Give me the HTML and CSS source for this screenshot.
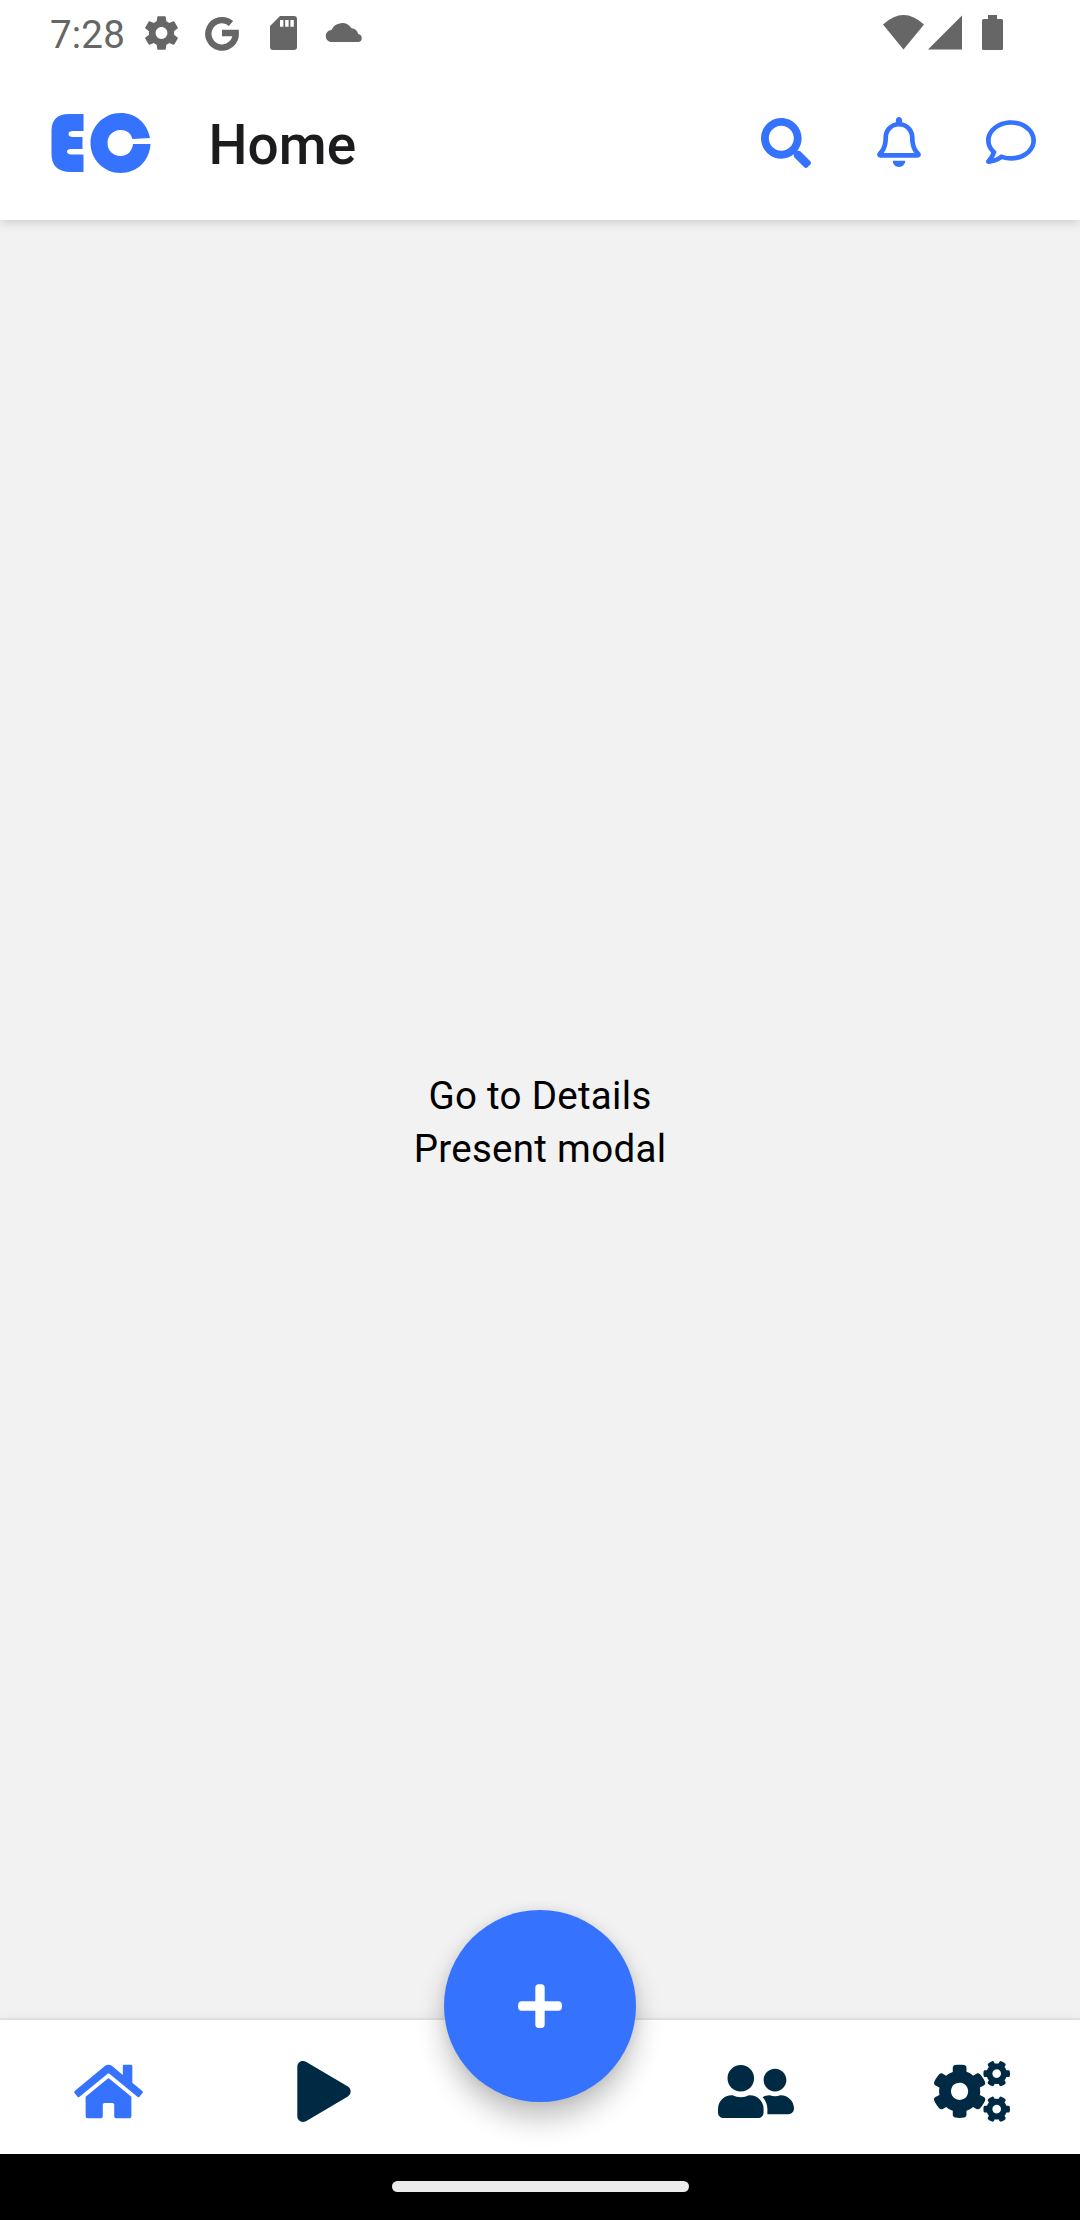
FILE: index.html
```html
<!DOCTYPE html>
<html lang="en">
<head>
<meta charset="utf-8">
<title>Home</title>
<link rel="stylesheet" href="styles.css">
</head>
<body>
<div class="app">
  <div class="top">
    <div class="status">
      <span class="clock">7:28</span>
      <svg class="st-gear" viewBox="2.2 2 19.6 20"><path d="M19.43 12.98c.04-.32.07-.64.07-.98s-.03-.66-.07-.98l2.11-1.65c.19-.15.24-.42.12-.64l-2-3.46c-.12-.22-.39-.3-.61-.22l-2.49 1c-.52-.4-1.08-.73-1.69-.98l-.38-2.65C14.46 2.18 14.25 2 14 2h-4c-.25 0-.46.18-.49.42l-.38 2.65c-.61.25-1.17.59-1.69.98l-2.49-1c-.23-.09-.49 0-.61.22l-2 3.46c-.13.22-.07.49.12.64l2.11 1.65c-.04.32-.07.65-.07.98s.03.66.07.98l-2.11 1.65c-.19.15-.24.42-.12.64l2 3.46c.12.22.39.3.61.22l2.49-1c.52.4 1.08.73 1.69.98l.38 2.65c.03.24.24.42.49.42h4c.25 0 .46-.18.49-.42l.38-2.65c.61-.25 1.17-.59 1.69-.98l2.49 1c.23.09.49 0 .61-.22l2-3.46c.12-.22.07-.49-.12-.64l-2.11-1.65zM12 15.5c-1.93 0-3.5-1.57-3.5-3.5s1.57-3.5 3.5-3.5 3.5 1.57 3.5 3.5-1.57 3.5-3.5 3.5z"/></svg>
      <svg class="st-g" viewBox="0 0 34 34"><path d="M26 7.5A13.7 13.7 0 1 0 30.7 17H17" fill="none" stroke="#666" stroke-width="6.4"/></svg>
      <svg class="st-sd" viewBox="0 0 27 34"><path fill-rule="evenodd" d="M10 0h14a3 3 0 0 1 3 3v28a3 3 0 0 1-3 3H3a3 3 0 0 1-3-3V10zM10 4v6.700h3.400V4zM15.200 4v6.700h3.400V4zM20.400 4v6.700h3.400V4z"/></svg>
      <svg class="st-cloud" viewBox="0 0 37 21"><path d="M6 21a6 6 0 0 1-.6-12A11.500 11.500 0 0 1 25.500 7.200A7.500 7.500 0 0 1 32.200 13A4.100 4.100 0 0 1 32.800 21z"/></svg>
      <svg class="st-net" viewBox="0 0 80 35"><path d="M0 9.500Q20.500-9.500 41 9.500L20.500 34.500zM45 34.500L79 .5v34z"/></svg>
      <svg class="st-bat" viewBox="0 0 21 35"><path d="M6 0h9v4h4.500q1.500 0 1.500 1.500v28q0 1.500-1.500 1.500h-18Q0 35 0 33.500v-28Q0 4 1.500 4H6z"/></svg>
    </div>
    <header class="bar">
      <svg class="logo" viewBox="0 0 100 60"><path d="M32.500 1v17H22q-4.500 0-4.500 3t4.500 3h9.500v12H20q-4 0-4 2.500t4 3h12.500V59H20Q0 59 .5 40V17Q1 1 18 1z"/><path d="M99 25C96 10 85 0 69.500 0C53 0 39.500 13.500 39.500 30S53 60 69.500 60S98.500 48 99.500 31H82C81 38 77 43 69.500 43S56.500 37.500 56.500 30S62 17 69.500 17Q79 17 81.500 26z"/></svg>
      <h1 class="title">Home</h1>
      <svg class="i-search" viewBox="0 0 512 512"><path d="M505 442.7L405.3 343c-4.500-4.500-10.600-7-17-7H372c27.600-35.300 44-79.700 44-128C416 93.100 322.900 0 208 0S0 93.100 0 208s93.100 208 208 208c48.300 0 92.700-16.400 128-44v16.300c0 6.400 2.500 12.500 7 17l99.700 99.700c9.400 9.400 24.600 9.400 33.900 0l28.300-28.300c9.400-9.400 9.400-24.600.1-34zM208 336c-70.700 0-128-57.200-128-128 0-70.700 57.200-128 128-128 70.700 0 128 57.200 128 128 0 70.700-57.200 128-128 128z"/></svg>
      <svg class="i-bell" viewBox="0 0 448 512"><path d="M439.390 362.290c-19.320-20.760-55.470-51.990-55.470-154.290 0-77.700-54.480-139.900-127.940-155.160V32c0-17.670-14.320-32-31.980-32s-31.980 14.330-31.980 32v20.840C118.560 68.100 64.080 130.300 64.080 208c0 102.300-36.150 133.530-55.470 154.290-6 6.450-8.660 14.160-8.610 21.710.11 16.400 12.980 32 32.100 32h383.800c19.120 0 32-15.600 32.100-32 .05-7.550-2.610-15.270-8.610-21.710zM67.530 368c21.220-27.970 44.420-74.330 44.530-159.420 0-.2-.06-.38-.06-.58 0-61.860 50.140-112 112-112s112 50.140 112 112c0 .2-.06.38-.06.58.11 85.100 23.310 131.460 44.530 159.420H67.530zM224 512c35.320 0 63.970-28.650 63.970-64H160.030c0 35.350 28.650 64 63.970 64z"/></svg>
      <svg class="i-chat" viewBox="0 0 512 512"><path d="M256 32C114.600 32 0 125.100 0 240c0 47.600 19.900 91.200 52.900 126.300C38 405.700 7 439.100 6.500 439.500c-6.600 7-8.400 17.200-4.600 26S14.400 480 24 480c61.500 0 110-25.700 139.100-46.300C192 442.800 223.200 448 256 448c141.400 0 256-93.100 256-208S397.400 32 256 32zm0 368c-26.700 0-53.100-4.100-78.400-12.100l-22.700-7.200-19.500 13.800c-14.300 10.100-33.900 21.400-57.500 29 7.300-12.100 14.400-25.700 19.900-40.200l10.600-28.100-20.600-21.800C69.700 314.100 48 282.200 48 240c0-88.200 93.300-160 208-160s208 71.800 208 160-93.300 160-208 160z"/></svg>
    </header>
  </div>

  <main class="content">
    <div>Go to Details</div>
    <div>Present modal</div>
  </main>

  <nav class="tabs">
    <div class="tab active"><svg width="69" height="61" viewBox="0 0 576 512"><path d="M280.370 148.260L96 300.110V464a16 16 0 0 0 16 16l112.060-.29a16 16 0 0 0 15.920-16V368a16 16 0 0 1 16-16h64a16 16 0 0 1 16 16v95.640a16 16 0 0 0 16 16.050L464 480a16 16 0 0 0 16-16V300L295.670 148.260a12.190 12.190 0 0 0-15.300 0zM571.600 251.470L488 182.560V44.050a12 12 0 0 0-12-12h-56a12 12 0 0 0-12 12v72.610L318.470 43a48 48 0 0 0-61 0L4.340 251.470a12 12 0 0 0-1.600 16.900l25.500 31A12 12 0 0 0 45.150 301l235.220-193.740a12.190 12.190 0 0 1 15.300 0L530.900 301a12 12 0 0 0 16.900-1.600l25.500-31a12 12 0 0 0-1.700-16.930z"/></svg></div>
    <div class="tab"><svg width="54" height="61" viewBox="0 0 448 512"><path d="M424.400 214.700L72.400 6.600C43.800-10.300 0 6.100 0 47.900V464c0 37.500 40.700 60.100 72.400 41.300l352-208c31.400-18.500 31.500-64.100 0-82.600z"/></svg></div>
    <div class="tab"><div class="fab"><svg width="44" height="50" viewBox="0 0 448 512"><path d="M416 208H272V64c0-17.670-14.330-32-32-32h-32c-17.670 0-32 14.330-32 32v144H32c-17.670 0-32 14.330-32 32v32c0 17.670 14.330 32 32 32h144v144c0 17.670 14.330 32 32 32h32c17.670 0 32-14.330 32-32V304h144c17.670 0 32-14.330 32-32v-32c0-17.670-14.330-32-32-32z"/></svg></div></div>
    <div class="tab"><svg width="76" height="61" viewBox="0 0 640 512"><path d="M192 256c61.900 0 112-50.100 112-112S253.900 32 192 32 80 82.100 80 144s50.100 112 112 112zm76.800 32h-8.300c-20.800 10-43.900 16-68.500 16s-47.600-6-68.500-16h-8.300C51.600 288 0 339.600 0 403.200V432c0 26.500 21.500 48 48 48h288c26.500 0 48-21.500 48-48v-28.800c0-63.600-51.600-115.200-115.200-115.200zM480 256c53 0 96-43 96-96s-43-96-96-96-96 43-96 96 43 96 96 96zm48 32h-3.800c-13.900 4.800-28.600 8-44.200 8s-30.300-3.200-44.200-8H432c-20.400 0-39.200 5.900-55.700 15.400 24.400 26.300 39.700 61.200 39.700 99.800v38.400c0 2.200-.5 4.300-.6 6.400H592c26.500 0 48-21.500 48-48 0-61.900-50.100-112-112-112z"/></svg></div>
    <div class="tab"><svg width="76" height="61" viewBox="0 0 640 512"><path d="M512.1 191l-8.2 14.3c-3 5.3-9.4 7.5-15.1 5.4-11.8-4.4-22.6-10.7-32.1-18.6-4.6-3.8-5.8-10.5-2.8-15.7l8.2-14.3c-6.9-8-12.3-17.3-15.9-27.4h-16.5c-6 0-11.2-4.3-12.2-10.3-2-12-2.1-24.6 0-37.1 1-6 6.2-10.4 12.2-10.4h16.5c3.6-10.1 9-19.4 15.9-27.4l-8.2-14.3c-3-5.2-1.9-11.9 2.8-15.7 9.5-7.9 20.4-14.2 32.1-18.6 5.7-2.1 12.1.1 15.1 5.4l8.2 14.3c10.5-1.9 21.2-1.9 31.7 0L552 6.3c3-5.3 9.4-7.5 15.1-5.4 11.8 4.4 22.6 10.7 32.1 18.6 4.6 3.8 5.8 10.5 2.8 15.7l-8.2 14.3c6.9 8 12.3 17.3 15.9 27.4h16.5c6 0 11.2 4.3 12.2 10.3 2 12 2.1 24.6 0 37.1-1 6-6.2 10.4-12.2 10.4h-16.5c-3.6 10.1-9 19.4-15.9 27.4l8.2 14.3c3 5.2 1.9 11.9-2.8 15.7-9.5 7.9-20.4 14.2-32.1 18.6-5.7 2.1-12.1-.1-15.1-5.4l-8.2-14.3c-10.4 1.9-21.2 1.9-31.7 0zm-10.5-58.8c38.5 29.6 82.4-14.3 52.8-52.8-38.5-29.7-82.4 14.3-52.8 52.8zM386.3 286.1l33.7 16.8c10.1 5.8 14.5 18.1 10.5 29.1-8.9 24.2-26.4 46.4-42.6 65.8-7.4 8.9-20.2 11.1-30.3 5.3l-29.1-16.8c-16 13.7-34.6 24.6-54.9 31.7v33.6c0 11.6-8.3 21.6-19.7 23.6-24.6 4.2-50.4 4.4-75.9 0-11.5-2-20-11.9-20-23.6V418c-20.3-7.2-38.9-18-54.9-31.7L74 403c-10 5.8-22.9 3.6-30.3-5.3-16.2-19.4-33.3-41.6-42.2-65.7-4-10.9.4-23.2 10.5-29.1l33.3-16.8c-3.9-20.9-3.9-42.4 0-63.4L12 205.800c-10.1-5.8-14.6-18.1-10.5-29 8.9-24.2 26-46.4 42.2-65.8 7.4-8.9 20.2-11.1 30.3-5.3l29.1 16.8c16-13.7 34.6-24.6 54.9-31.7V57.1c0-11.5 8.2-21.5 19.6-23.5 24.6-4.2 50.5-4.4 76-.1 11.5 2 20 11.9 20 23.6v33.6c20.3 7.2 38.9 18 54.9 31.7l29.1-16.8c10-5.8 22.9-3.6 30.3 5.3 16.2 19.4 33.2 41.6 42.1 65.8 4 10.9.1 23.2-10 29.1l-33.7 16.8c3.9 21 3.9 42.5 0 63.5zm-117.6 21.1c59.2-77-28.7-164.9-105.7-105.7-59.2 77 28.7 164.9 105.700 105.7zm243.4 182.7l-8.2 14.3c-3 5.3-9.4 7.5-15.1 5.4-11.8-4.4-22.6-10.7-32.1-18.6-4.6-3.8-5.8-10.5-2.8-15.7l8.2-14.3c-6.9-8-12.3-17.3-15.9-27.4h-16.5c-6 0-11.2-4.3-12.2-10.3-2-12-2.1-24.6 0-37.1 1-6 6.2-10.4 12.2-10.4h16.5c3.6-10.1 9-19.4 15.9-27.4l-8.2-14.3c-3-5.2-1.9-11.9 2.8-15.7 9.5-7.9 20.4-14.2 32.1-18.6 5.7-2.1 12.1.1 15.1 5.4l8.2 14.3c10.5-1.9 21.2-1.9 31.7 0l8.2-14.3c3-5.3 9.4-7.5 15.1-5.4 11.8 4.4 22.6 10.7 32.1 18.6 4.6 3.8 5.8 10.5 2.8 15.7l-8.2 14.3c6.9 8 12.3 17.3 15.9 27.4h16.5c6 0 11.2 4.3 12.2 10.3 2 12 2.1 24.6 0 37.1-1 6-6.2 10.4-12.2 10.4h-16.5c-3.6 10.1-9 19.4-15.9 27.4l8.2 14.3c3 5.2 1.9 11.9-2.8 15.7-9.5 7.9-20.4 14.2-32.1 18.6-5.7 2.1-12.1-.1-15.1-5.4l-8.2-14.3c-10.4 1.9-21.2 1.9-31.7 0zM501.6 431c38.5 29.6 82.4-14.3 52.8-52.8-38.5-29.6-82.4 14.3-52.8 52.8z"/></svg></div>
  </nav>
  <div class="gesture"><div class="pill"></div></div>
</div>
</body>
</html>
```
FILE: styles.css
```css
* { box-sizing: border-box; }
body { margin: 0; font-family: Roboto, sans-serif; background: #f2f2f2; }
svg { display: block; flex: none; overflow: visible; }

.app { display: flex; flex-direction: column; width: 1080px; height: 2220px; overflow: hidden; }

.top { height: 220px; flex: none; background: #fff; box-shadow: 0 2px 10px rgba(0, 0, 0, .17); }
.status { display: flex; height: 66px; padding: 15px 77px 0 50px; color: #666; fill: #666; }
.clock { width: 95px; padding-top: 1px; font-size: 38.5px; line-height: 38px; letter-spacing: .2px; }
.st-gear { width: 33px; height: 34px; margin-top: 1px; }
.st-g { width: 34px; height: 34px; margin: 1px 0 0 27px; }
.st-sd { width: 27px; height: 34px; margin: 1px 0 0 31px; }
.st-cloud { width: 37px; height: 21px; margin: 6px 0 0 29px; }
.st-net { width: 80px; height: 35px; margin-left: auto; }
.st-bat { width: 21px; height: 35px; margin-left: 19px; }

.bar { display: flex; height: 154px; padding: 0 44px 0 51px; fill: #3573ff; }
.logo { width: 100px; height: 60px; margin-top: 47px; }
.title { margin: 46px auto 0 57.5px; font-size: 55px; font-weight: 500; line-height: 66px; color: #1c1c1e; }
.i-search { width: 50px; height: 50px; margin-top: 52px; }
.i-bell { width: 44px; height: 50px; margin: 51px 0 0 66px; }
.i-chat { width: 50px; height: 50px; margin: 51px 0 0 65px; }

.content { flex: 1; display: flex; flex-direction: column; align-items: center; justify-content: center; padding-top: 6px; font-size: 38.5px; line-height: 53px; letter-spacing: .3px; color: #000; }

.tabs { display: grid; grid-template-columns: repeat(5, 1fr); height: 136px; background: #fff; border-top: 2px solid #e0e0e0; box-shadow: 0 0 12px rgba(0, 0, 0, .05); fill: #002a44; }
.tab { display: flex; justify-content: center; padding-top: 41px; }
.tab.active { fill: #3573ff; }
.fab { display: flex; align-items: center; justify-content: center; flex: none; width: 192px; height: 192px; margin-top: -151px; border-radius: 50%; background: #3573ff; fill: #fff; box-shadow: 0 17px 28px rgba(0, 0, 0, .24), 0 0 12px rgba(0, 0, 0, .08); }
.gesture { display: flex; justify-content: center; height: 66px; padding-top: 27px; background: #000; z-index: 1; }
.pill { width: 297px; height: 11px; border-radius: 6px; background: #ebebeb; }
```
